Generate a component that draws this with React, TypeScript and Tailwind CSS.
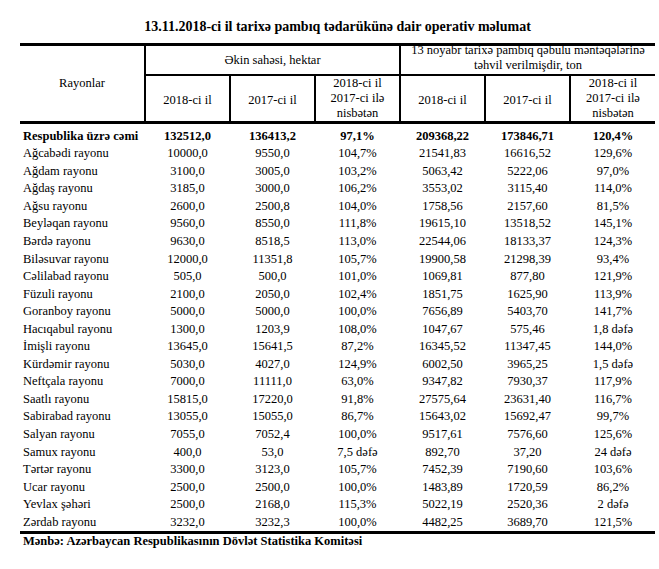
type Row = [string, string, string, string, string, string, string]

const rows: Row[] = [
  ["Respublika üzrə cəmi", "132512,0", "136413,2", "97,1%", "209368,22", "173846,71", "120,4%"],
  ["Ağcabədi rayonu", "10000,0", "9550,0", "104,7%", "21541,83", "16616,52", "129,6%"],
  ["Ağdam rayonu", "3100,0", "3005,0", "103,2%", "5063,42", "5222,06", "97,0%"],
  ["Ağdaş rayonu", "3185,0", "3000,0", "106,2%", "3553,02", "3115,40", "114,0%"],
  ["Ağsu rayonu", "2600,0", "2500,8", "104,0%", "1758,56", "2157,60", "81,5%"],
  ["Beyləqan rayonu", "9560,0", "8550,0", "111,8%", "19615,10", "13518,52", "145,1%"],
  ["Bərdə rayonu", "9630,0", "8518,5", "113,0%", "22544,06", "18133,37", "124,3%"],
  ["Biləsuvar rayonu", "12000,0", "11351,8", "105,7%", "19900,58", "21298,39", "93,4%"],
  ["Cəlilabad rayonu", "505,0", "500,0", "101,0%", "1069,81", "877,80", "121,9%"],
  ["Füzuli rayonu", "2100,0", "2050,0", "102,4%", "1851,75", "1625,90", "113,9%"],
  ["Goranboy rayonu", "5000,0", "5000,0", "100,0%", "7656,89", "5403,70", "141,7%"],
  ["Hacıqabul rayonu", "1300,0", "1203,9", "108,0%", "1047,67", "575,46", "1,8 dəfə"],
  ["İmişli rayonu", "13645,0", "15641,5", "87,2%", "16345,52", "11347,45", "144,0%"],
  ["Kürdəmir rayonu", "5030,0", "4027,0", "124,9%", "6002,50", "3965,25", "1,5 dəfə"],
  ["Neftçala rayonu", "7000,0", "11111,0", "63,0%", "9347,82", "7930,37", "117,9%"],
  ["Saatlı rayonu", "15815,0", "17220,0", "91,8%", "27575,64", "23631,40", "116,7%"],
  ["Sabirabad rayonu", "13055,0", "15055,0", "86,7%", "15643,02", "15692,47", "99,7%"],
  ["Salyan rayonu", "7055,0", "7052,4", "100,0%", "9517,61", "7576,60", "125,6%"],
  ["Samux rayonu", "400,0", "53,0", "7,5 dəfə", "892,70", "37,20", "24 dəfə"],
  ["Tərtər rayonu", "3300,0", "3123,0", "105,7%", "7452,39", "7190,60", "103,6%"],
  ["Ucar rayonu", "2500,0", "2500,0", "100,0%", "1483,89", "1720,59", "86,2%"],
  ["Yevlax şəhəri", "2500,0", "2168,0", "115,3%", "5022,19", "2520,36", "2 dəfə"],
  ["Zərdab rayonu", "3232,0", "3232,3", "100,0%", "4482,25", "3689,70", "121,5%"],
]

const YearCell = ({ label, last }: { label: string; last?: boolean }) => (
  <div
    className={
      last
        ? "flex-1 flex items-center justify-center pt-[4px]"
        : "w-[85px] border-r-2 border-black flex items-center justify-center pt-[4px]"
    }
  >
    {label}
  </div>
)

const RatioCell = ({ last }: { last?: boolean }) => (
  <div
    className={
      last
        ? "flex-1 flex flex-col items-center justify-center leading-[15px]"
        : "w-[85px] border-r-2 border-black flex flex-col items-center justify-center leading-[15px]"
    }
  >
    <span>2018-ci il</span>
    <span>2017-ci ilə</span>
    <span>nisbətən</span>
  </div>
)

export default function App() {
  return (
    <div className="min-h-screen bg-white text-black font-['Liberation_Serif','DejaVu_Serif','Times_New_Roman',serif] text-[12.5px] pl-[20px] pt-[19px]">
      <div className="w-[635px]">
        <h1 className="text-center font-bold text-[14px] leading-[16px] mb-[8px]">
          13.11.2018-ci il tarixə pambıq tədarükünə dair operativ məlumat
        </h1>

        <div className="flex border-t-[3px] border-b-[3px] border-black leading-[15px]">
          <div className="w-[126px] border-r-2 border-black flex items-center justify-center">
            Rayonlar
          </div>
          <div className="flex-1 flex flex-col">
            <div className="flex h-[30px] border-b-2 border-black">
              <div className="w-[255px] border-r-2 border-black flex items-center justify-center">
                Əkin sahəsi, hektar
              </div>
              <div className="flex-1 flex flex-col items-center -mt-[3px]">
                <span>13 noyabr tarixə pambıq qəbulu məntəqələrinə</span>
                <span>təhvil verilmişdir, ton</span>
              </div>
            </div>
            <div className="flex h-[45px]">
              <YearCell label="2018-ci il" />
              <YearCell label="2017-ci il" />
              <RatioCell />
              <YearCell label="2018-ci il" />
              <YearCell label="2017-ci il" />
              <RatioCell last />
            </div>
          </div>
        </div>

        <div className="pt-[3.7px] border-b-[3px] border-black">
          {rows.map((r, i) => (
            <div
              key={r[0]}
              className={
                i === 0
                  ? "grid grid-cols-[126px_85px_85px_85px_85px_85px_84px] h-[17.55px] leading-[17.55px] font-bold"
                  : "grid grid-cols-[126px_85px_85px_85px_85px_85px_84px] h-[17.55px] leading-[17.55px]"
              }
            >
              <div className="pl-[3px] whitespace-nowrap">{r[0]}</div>
              <div className="text-center pr-[2px]">{r[1]}</div>
              <div className="text-center pr-[2px]">{r[2]}</div>
              <div className="text-center pr-[2px]">{r[3]}</div>
              <div className="text-center pr-[2px]">{r[4]}</div>
              <div className="text-center pr-[2px]">{r[5]}</div>
              <div className="text-center">{r[6]}</div>
            </div>
          ))}
        </div>

        <p className="pl-[3px] font-bold leading-[14px] whitespace-nowrap">
          Mənbə: Azərbaycan Respublikasının Dövlət Statistika Komitəsi
        </p>
      </div>
    </div>
  )
}
